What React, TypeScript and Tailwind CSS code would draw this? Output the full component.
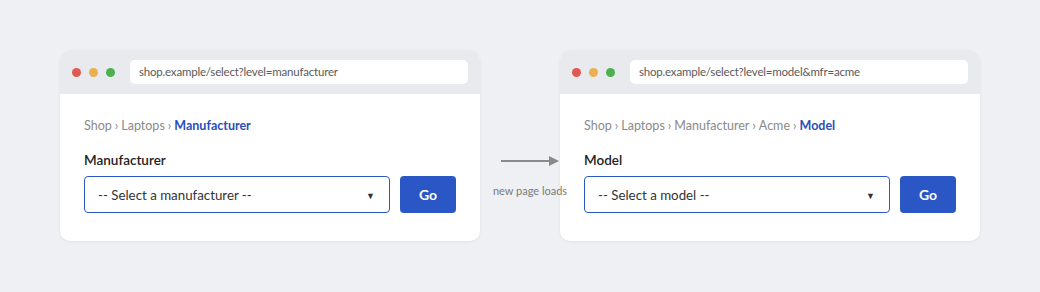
import React from 'react';

interface BrowserCardProps {
  url: string;
  crumbs: string[];
  current: string;
  label: string;
  placeholder: string;
}

function BrowserCard({ url, crumbs, current, label, placeholder }: BrowserCardProps) {
  return (
    <div className="w-[420px] h-[191px] shrink-0 rounded-[10px] bg-white shadow-[0_1px_3px_rgba(0,0,0,0.06)] overflow-hidden flex flex-col">
      {/* title bar */}
      <div className="h-[44px] bg-[#e9eaee] flex items-center pl-[12px] pr-[12px] gap-[15px]">
        <div className="flex items-center gap-[8px]">
          <span className="w-[9px] h-[9px] rounded-full bg-[#e05a55]" />
          <span className="w-[9px] h-[9px] rounded-full bg-[#e8b04e]" />
          <span className="w-[9px] h-[9px] rounded-full bg-[#4caf50]" />
        </div>
        <div className="flex-1 h-[24px] rounded-[5px] bg-white flex items-center px-[9px] text-[11.5px] tracking-[-0.2px] text-[#5a5a5a]">
          {url}
        </div>
      </div>

      {/* page body */}
      <div className="flex-1 px-[24px] pt-[23px]">
        <div className="text-[12.5px] leading-[18px] text-[#8a8a8a]">
          {crumbs.map((c) => (
            <span key={c}>
              {c}
              <span className="mx-[3px]">›</span>
            </span>
          ))}
          <span className="font-bold text-[#2a4fb8]">{current}</span>
        </div>
        <div className="mt-[15px] text-[13.5px] leading-[20px] font-semibold text-[#222]">{label}</div>
        <div className="mt-[6px] flex items-center gap-[10px]">
          <div className="w-[306px] h-[37px] rounded-[4px] border-[1.5px] border-[#2a56c6] flex items-center justify-between pl-[13px] pr-[14px] pt-[2px] text-[13.3px] text-[#333]">
            <span>{placeholder}</span>
            <span className="text-[9px] text-[#333]">▼</span>
          </div>
          <button className="w-[56px] h-[37px] rounded-[4px] bg-[#2a56c6] text-white text-[14px] font-bold">
            Go
          </button>
        </div>
      </div>
    </div>
  );
}

export default function App() {
  return (
    <div
      className="w-[1040px] h-[292px] bg-[#eef0f4] flex items-start px-[60px] pt-[50px]"
      style={{ fontFamily: 'Lato, "Noto Sans", sans-serif' }}
    >
      <BrowserCard
        url="shop.example/select?level=manufacturer"
        crumbs={['Shop', 'Laptops']}
        current="Manufacturer"
        label="Manufacturer"
        placeholder="-- Select a manufacturer --"
      />

      {/* transition arrow */}
      <div className="w-[80px] shrink-0 relative z-10 flex flex-col items-center pt-[106px] translate-x-[10px]">
        <svg width="58" height="10" viewBox="0 0 58 10">
          <line x1="0" y1="5" x2="50" y2="5" stroke="#8a8a8a" strokeWidth="2" />
          <polygon points="48,0 58,5 48,10" fill="#8a8a8a" />
        </svg>
        <div className="mt-[18px] text-[11px] leading-[14px] whitespace-nowrap text-[#7a7a7a]">new page loads</div>
      </div>

      <BrowserCard
        url="shop.example/select?level=model&mfr=acme"
        crumbs={['Shop', 'Laptops', 'Manufacturer', 'Acme']}
        current="Model"
        label="Model"
        placeholder="-- Select a model --"
      />
    </div>
  );
}
